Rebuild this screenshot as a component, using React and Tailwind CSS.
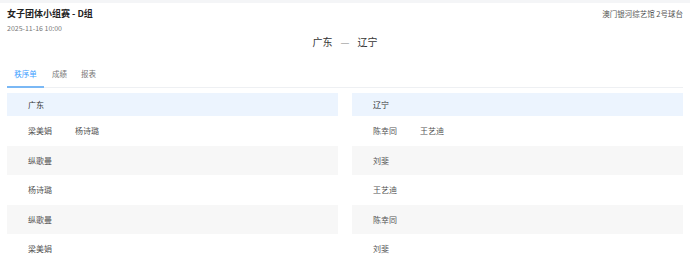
import React from "react";

const rows = [
  { left: ["梁美娟", "杨诗璐"], right: ["陈幸同", "王艺迪"], bg: "bg-white" },
  { left: ["纵歌曼"], right: ["刘斐"], bg: "bg-[#f7f7f7]" },
  { left: ["杨诗璐"], right: ["王艺迪"], bg: "bg-white" },
  { left: ["纵歌曼"], right: ["陈幸同"], bg: "bg-[#f7f7f7]" },
  { left: ["梁美娟"], right: ["刘斐"], bg: "bg-white" },
];

function Column({ team, side }) {
  return (
    <div className="flex flex-col">
      <div className="h-[23px] bg-[#ecf4fe] flex items-center pl-[21px] text-[8px] text-[#333]">
        {team}
      </div>
      {rows.map((r, i) => (
        <div key={i} className={`h-[29.5px] flex items-center pl-[21px] text-[8px] text-[#555] ${r.bg}`}>
          {r[side].map((n, j) => (
            <span key={j} className="w-[47px]">
              {n}
            </span>
          ))}
        </div>
      ))}
    </div>
  );
}

export default function App() {
  return (
    <div
      className="w-[690px] h-[267px] overflow-hidden bg-white"
      style={{ fontFamily: '"Noto Sans CJK SC", "Noto Sans", sans-serif' }}
    >
      <div className="h-[3px] bg-[#f4f5f7]" />
      <div className="px-[7px]">
        <div className="grid grid-cols-3 pt-[4px]">
          <div>
            <div className="text-[9px] font-bold text-[#222] leading-[13px]">女子团体小组赛 - D组</div>
            <div className="text-[7px] text-[#777] leading-[10px] mt-[3px]">2025-11-16 10:00</div>
          </div>
          <div className="flex justify-center items-center gap-[8px] pt-[29px] text-[10px] text-[#333] leading-[12px]">
            <span>广东</span>
            <span className="text-[#aaa]">—</span>
            <span>辽宁</span>
          </div>
          <div className="text-right text-[7.5px] text-[#555] leading-[13px]">澳门银河综艺馆 2号球台</div>
        </div>
        <div className="mt-[20px] flex border-b border-[#eef0f3] text-[7.5px] text-[#777]">
          <div className="w-[37px] text-center pb-[7px] text-[#409eff] border-b-2 border-[#7ab8f5] -mb-px">秩序单</div>
          <div className="ml-[8px] pb-[7px]">成绩</div>
          <div className="ml-[14px] pb-[7px]">报表</div>
        </div>
        <div className="grid grid-cols-2 gap-[14px] mt-[5px]">
          <Column team="广东" side="left" />
          <Column team="辽宁" side="right" />
        </div>
      </div>
    </div>
  );
}
